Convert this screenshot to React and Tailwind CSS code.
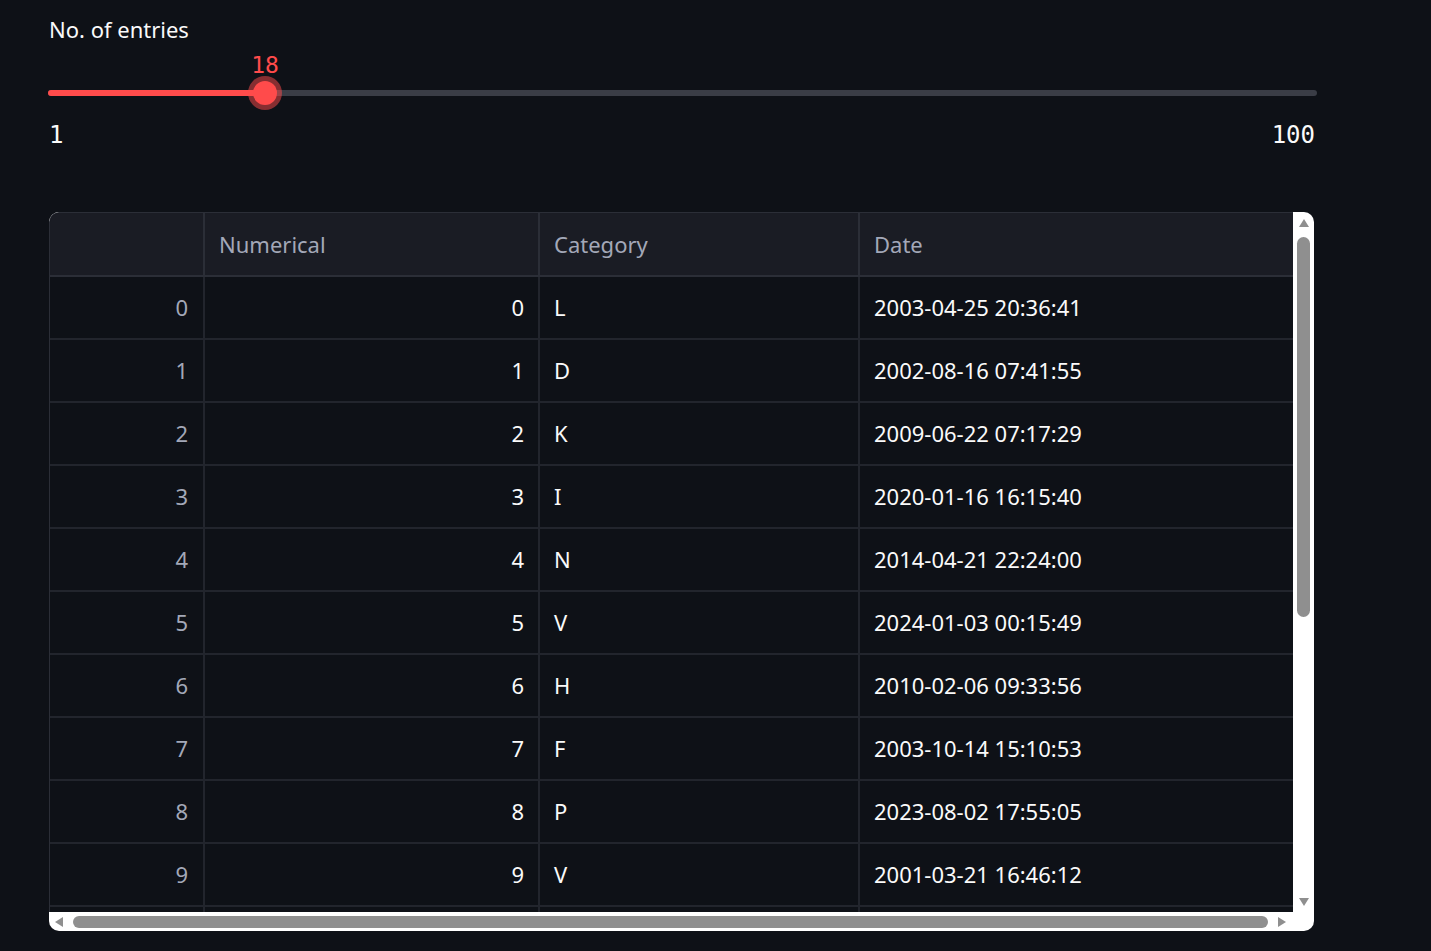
import React from "react";

const rows = [
  ["0", "0", "L", "2003-04-25 20:36:41"],
  ["1", "1", "D", "2002-08-16 07:41:55"],
  ["2", "2", "K", "2009-06-22 07:17:29"],
  ["3", "3", "I", "2020-01-16 16:15:40"],
  ["4", "4", "N", "2014-04-21 22:24:00"],
  ["5", "5", "V", "2024-01-03 00:15:49"],
  ["6", "6", "H", "2010-02-06 09:33:56"],
  ["7", "7", "F", "2003-10-14 15:10:53"],
  ["8", "8", "P", "2023-08-02 17:55:05"],
  ["9", "9", "V", "2001-03-21 16:46:12"],
  ["", "", "", ""],
];

const sans = { fontFamily: '"Source Sans Pro", "Noto Sans", sans-serif' };
const mono = { fontFamily: '"DejaVu Sans Mono", "Liberation Mono", monospace' };

export default function App() {
  return (
    <div className="min-h-screen w-full bg-[#0e1117] text-[#fafafa]" style={sans}>
      <div className="pl-[48px] pt-[14px] w-[1317px]">
        <div className="text-[22px] leading-[30px] pl-px">No. of entries</div>
        {/* slider */}
        <div className="relative h-[98px]">
          <div className="absolute left-0 right-0 top-[46px] h-[6px] rounded-full bg-[#3a3d46]" />
          <div className="absolute left-0 top-[46px] h-[6px] w-[217px] rounded-l-full bg-[#ff4b4b]" />
          <div className="absolute left-[190px] top-[8px] w-[54px] text-center text-[23px] leading-[26px] text-[#ff4b4b]" style={mono}>18</div>
          <div className="absolute left-[200px] top-[32px] w-[34px] h-[34px] rounded-full bg-[#ff4b4b]/50 flex items-center justify-center">
            <div className="w-[24px] h-[24px] rounded-full bg-[#ff4b4b]" />
          </div>
          <div className="absolute left-px top-[78px] text-[24px] leading-[26px]" style={mono}>1</div>
          <div className="absolute right-[2px] top-[78px] text-[24px] leading-[26px]" style={mono}>100</div>
        </div>
      </div>

      {/* table */}
      <div className="ml-[49px] mt-[70px] w-[1265px] h-[719px] rounded-[10px] bg-white overflow-hidden flex flex-col">
        <div className="flex h-[700px]">
          <div className="w-[1244px] h-[700px] overflow-hidden bg-[#0e1117] border-l border-t border-[#2b2e37] rounded-tl-[10px]">
            <div className="grid grid-cols-[155px_335px_320px_434px] h-[64px] bg-[#1a1c24] border-b-2 border-[#2b2e37] text-[22px] text-[#a3a8b8]">
              <div className="border-r-2 border-[#2b2e37]" />
              <div className="border-r-2 border-[#2b2e37] pl-[14px] flex items-center">Numerical</div>
              <div className="border-r-2 border-[#2b2e37] pl-[14px] flex items-center">Category</div>
              <div className="pl-[14px] flex items-center">Date</div>
            </div>
            {rows.map((r, i) => (
              <div key={i} className="grid grid-cols-[155px_335px_320px_434px] h-[63px] border-b-2 border-[#22252d] text-[22px]">
                <div className="border-r-2 border-[#22252d] pr-[15px] flex items-center justify-end text-[#a3a8b8]">{r[0]}</div>
                <div className="border-r-2 border-[#22252d] pr-[14px] flex items-center justify-end">{r[1]}</div>
                <div className="border-r-2 border-[#22252d] pl-[14px] flex items-center">{r[2]}</div>
                <div className="pl-[14px] flex items-center">{r[3]}</div>
              </div>
            ))}
          </div>
          <div className="w-[21px] h-[700px] flex flex-col items-center">
            <svg width="12" height="10" viewBox="0 0 12 10" className="mt-[6px]"><polygon points="6,1 11,9 1,9" fill="#8f8f8f" /></svg>
            <div className="mt-[9px] w-[13px] h-[380px] rounded-full bg-[#8f8f8f]" />
            <div className="flex-1" />
            <svg width="12" height="10" viewBox="0 0 12 10" className="mb-[5px]"><polygon points="1,1 11,1 6,9" fill="#8f8f8f" /></svg>
          </div>
        </div>
        <div className="h-[19px] flex items-center">
          <svg width="10" height="12" viewBox="0 0 10 12" className="ml-[5px]"><polygon points="9,1 9,11 1,6" fill="#8f8f8f" /></svg>
          <div className="ml-[9px] w-[1195px] h-[12px] rounded-full bg-[#8f8f8f]" />
          <svg width="10" height="12" viewBox="0 0 10 12" className="ml-[9px]"><polygon points="1,1 1,11 9,6" fill="#8f8f8f" /></svg>
        </div>
      </div>
    </div>
  );
}
